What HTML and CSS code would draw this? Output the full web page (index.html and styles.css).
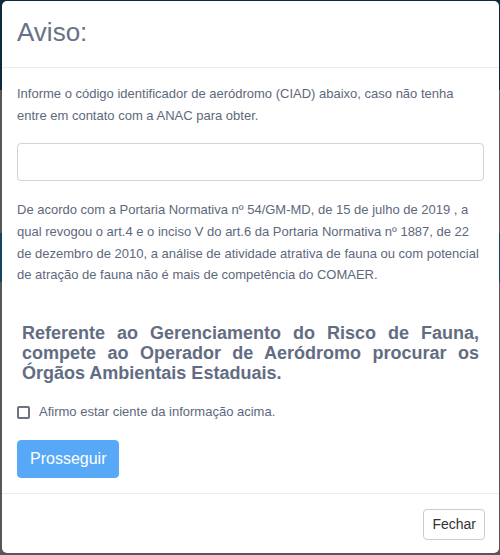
FILE: index.html
```html
<!DOCTYPE html>
<html lang="pt-BR">
<head>
<meta charset="utf-8">
<title>Aviso</title>
<link rel="stylesheet" href="styles.css">
</head>
<body>
<div class="modal">
  <div class="modal-header">
    <h4 class="modal-title">Aviso:</h4>
  </div>
  <div class="modal-body">
    <p class="info">Informe o código identificador de aeródromo (CIAD) abaixo, caso não tenha entre em contato com a ANAC para obter.</p>
    <input class="field" type="text">
    <p class="info note">De acordo com a Portaria Normativa nº 54/GM-MD, de 15 de julho de 2019 , a qual revogou o art.4 e o inciso V do art.6 da Portaria Normativa nº 1887, de 22 de dezembro de 2010, a análise de atividade atrativa de fauna ou com potencial de atração de fauna não é mais de competência do COMAER.</p>
    <p class="notice">Referente ao Gerenciamento do Risco de Fauna, compete ao Operador de Aeródromo procurar os Órgãos Ambientais Estaduais.</p>
    <label class="check"><span class="box"></span>Afirmo estar ciente da informação acima.</label>
    <div class="actions"><button class="btn-primary" type="button">Prosseguir</button></div>
  </div>
  <div class="modal-footer">
    <button class="btn-close" type="button">Fechar</button>
  </div>
</div>
</body>
</html>
```

FILE: styles.css
```css
* { box-sizing: border-box; }
html, body { height: 100%; }
body {
  margin: 0;
  padding: 1px 0 0 2px;
  font-family: "Liberation Sans", Arial, sans-serif;
  background-color: #575757;
  background-image:
    linear-gradient(to bottom, #0d2a3d 0, #0d2a3d 90px, transparent 90px, transparent 233px, #16465f 233px, #16465f 282px, transparent 282px);
  overflow: hidden;
}
.modal {
  width: 497px;
  height: 552px;
  background: #fff;
  border-radius: 5px;
  display: flex;
  flex-direction: column;
}
.modal-header {
  padding: 13px 15px 17px;
  border-bottom: 1px solid #e9ecef;
}
.modal-title {
  margin: 0;
  font-size: 26px;
  line-height: 36px;
  font-weight: 400;
  color: #687186;
}
.modal-body {
  flex: 1;
  padding: 15px 15px 15px;
  display: flex;
  flex-direction: column;
}
.info {
  margin: 0;
  font-size: 13px;
  line-height: 22px;
  color: #5e687c;
}
.field {
  margin-top: 16px;
  height: 38px;
  width: 100%;
  border: 1px solid #ced4da;
  border-radius: 4px;
  background: #fff;
}
.note {
  margin-top: 18px;
  line-height: 21.8px;
}
.notice {
  margin: 37px 5px 0;
  font-size: 18px;
  line-height: 20px;
  font-weight: 700;
  text-align: justify;
  color: #626d83;
}
.check {
  margin-top: 18px;
  display: flex;
  align-items: center;
  gap: 9px;
  font-size: 13px;
  line-height: 22px;
  color: #5e687c;
}
.box {
  width: 13px;
  height: 13px;
  border: 2px solid #6b7280;
  border-radius: 2px;
  flex: none;
}
.actions {
  margin-top: 17px;
  display: flex;
}
.btn-primary {
  font-family: inherit;
  font-size: 16px;
  line-height: 24px;
  padding: 6px 12px;
  border: 1px solid #57a9f7;
  background: #57a9f7;
  color: #fff;
  border-radius: 4px;
}
.modal-footer {
  border-top: 1px solid #e9ecef;
  padding: 15px 14px 14px;
  display: flex;
  justify-content: flex-end;
}
.btn-close {
  font-family: inherit;
  font-size: 14px;
  line-height: 21px;
  padding: 4px 8px;
  border: 1px solid #ccc;
  background: #fff;
  color: #333;
  border-radius: 4px;
}
```
